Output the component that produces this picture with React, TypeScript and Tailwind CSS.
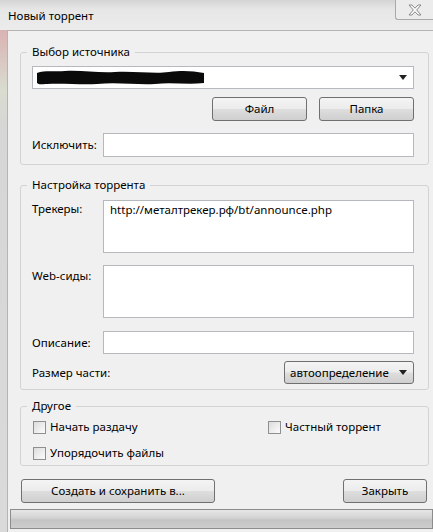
import type { ReactNode } from "react";

const font = "font-['Noto_Sans','Liberation_Sans',sans-serif]";
const fieldClass = "border border-[#b5b8bd] bg-white";
const buttonClass =
  "flex items-center justify-center rounded-[3px] border border-[#707070] bg-[linear-gradient(#f4f4f4_0%,#ececec_48%,#dedede_52%,#cfcfcf_100%)] text-[11.5px] leading-none text-black";

const Arrow = () => (
  <svg width="8" height="5" viewBox="0 0 8 5" className="shrink-0">
    <path d="M0 0 L8 0 L4 5 Z" fill="#222" />
  </svg>
);

const Group = ({ title, className, children }: { title: string; className?: string; children: ReactNode }) => (
  <fieldset className={`rounded-[3px] border border-[#d3d3d3] pl-[11px] pr-[14px] ${className ?? ""}`}>
    <legend className="-ml-[5px] px-[5px] text-[11.5px] leading-[16px]">{title}</legend>
    {children}
  </fieldset>
);

const Check = ({ label }: { label: string }) => (
  <div className="flex h-[16px] items-center">
    <span className="h-[13px] w-[13px] border border-[#8e8f8f] bg-[linear-gradient(135deg,#dcdcdc,#fbfbfb)] p-[2px]">
      <span className="block h-full w-full bg-[linear-gradient(135deg,#e2e2e2,#f7f7f7)]" />
    </span>
    <span className="ml-[4px] text-[11.5px]">{label}</span>
  </div>
);

export default function App() {
  return (
    <div className={`flex h-[532px] w-[433px] flex-col overflow-hidden bg-[#e9e9e9] text-black ${font}`}>
      {/* title bar */}
      <div className="flex h-[30px] shrink-0 items-start justify-between bg-[linear-gradient(#d4d4d4,#e6e6e6_30%,#ececec)]">
        <span className="pl-[8px] pt-[8px] text-[11.5px] leading-[16px]">Новый торрент</span>
        <div className="flex h-[20px] w-[38px] items-center justify-center rounded-bl-[3px] border-b border-l border-[#a9a9a9] bg-[#ececec]">
          <svg width="14" height="12" viewBox="0 0 14 12">
            <path
              d="M1 1 H4 L7 4.2 L10 1 H13 L8.7 6 L13 11 H10 L7 7.8 L4 11 H1 L5.3 6 Z"
              fill="#fafafa"
              stroke="#8a8a8a"
              strokeWidth="1"
            />
          </svg>
        </div>
      </div>

      <div className="flex flex-1">
        <div className="w-[7px] shrink-0 bg-[linear-gradient(#d9b3b3,#d9dccf_12%,#d6d6d6_20%,#dadada)]" />
        <div className="flex flex-1 flex-col border-l border-t border-[#b4b4b4] bg-[#f0f0f0]">
          <div className="flex flex-col pl-[12px] pr-[4px] pt-[13px]">
            <Group title="Выбор источника" className="pb-[7px]">
              <div className={`mt-[6px] flex h-[23px] items-center justify-between pl-[4px] pr-[6px] ${fieldClass}`}>
                <svg width="168" height="16" viewBox="0 0 168 16">
                  <path
                    d="M0 3 C8 0 18 2 28 1 C45 0 60 3 78 2 C98 1 118 4 132 2 C146 0 156 1 167 3 L167 13 C150 15 135 12 118 14 C100 15 80 12 60 14 C45 15 25 13 10 14 C5 14 2 15 0 13 Z"
                    fill="#0a0a0a"
                  />
                </svg>
                <Arrow />
              </div>
              <div className="mt-[8px] flex justify-end gap-[12px]">
                <button className={`h-[24px] w-[95px] ${buttonClass}`}>Файл</button>
                <button className={`h-[24px] w-[95px] ${buttonClass}`}>Папка</button>
              </div>
              <div className="mt-[12px] flex items-center">
                <span className="w-[71px] shrink-0 text-[11.5px]">Исключить:</span>
                <div className={`h-[24px] flex-1 ${fieldClass}`} />
              </div>
            </Group>

            <Group title="Настройка торрента" className="mt-[12px] pb-[5px]">
              <div className="mt-[7px] flex">
                <span className="w-[71px] shrink-0 pt-[1px] text-[11.5px] leading-[16px]">Трекеры:</span>
                <div className={`h-[53px] flex-1 px-[6px] pt-[1px] text-[11.5px] leading-[16px] ${fieldClass}`}>
                  http://металтрекер.рф/bt/announce.php
                </div>
              </div>
              <div className="mt-[12px] flex">
                <span className="w-[71px] shrink-0 pt-[3px] text-[11.5px] leading-[16px]">Web-сиды:</span>
                <div className={`h-[53px] flex-1 ${fieldClass}`} />
              </div>
              <div className="mt-[13px] flex items-center">
                <span className="w-[71px] shrink-0 text-[11.5px]">Описание:</span>
                <div className={`h-[23px] flex-1 ${fieldClass}`} />
              </div>
              <div className="mt-[7px] flex items-center justify-between">
                <span className="text-[11.5px]">Размер части:</span>
                <div className={`h-[23px] w-[130px] !justify-between pl-[5px] pr-[6px] ${buttonClass}`}>
                  <span>автоопределение</span>
                  <Arrow />
                </div>
              </div>
            </Group>

            <Group title="Другое" className="mt-[8px] pb-[4px]">
              <div className="mt-[5px] grid grid-cols-[235px_1fr] pl-px">
                <Check label="Начать раздачу" />
                <Check label="Частный торрент" />
              </div>
              <div className="mt-[10px] pl-px">
                <Check label="Упорядочить файлы" />
              </div>
            </Group>

            <div className="mt-[13px] flex justify-between pl-px pr-[2px]">
              <button className={`h-[24px] w-[194px] ${buttonClass}`}>Создать и сохранить в...</button>
              <button className={`h-[24px] w-[84px] ${buttonClass}`}>Закрыть</button>
            </div>
          </div>
          <div className="ml-[2px] mt-[6px] h-[20px] border border-[#8c8c8c] bg-[linear-gradient(#e6e6e6,#d3d3d3_45%,#c4c4c4_55%,#cdcdcd)]" />
        </div>
      </div>
    </div>
  );
}
